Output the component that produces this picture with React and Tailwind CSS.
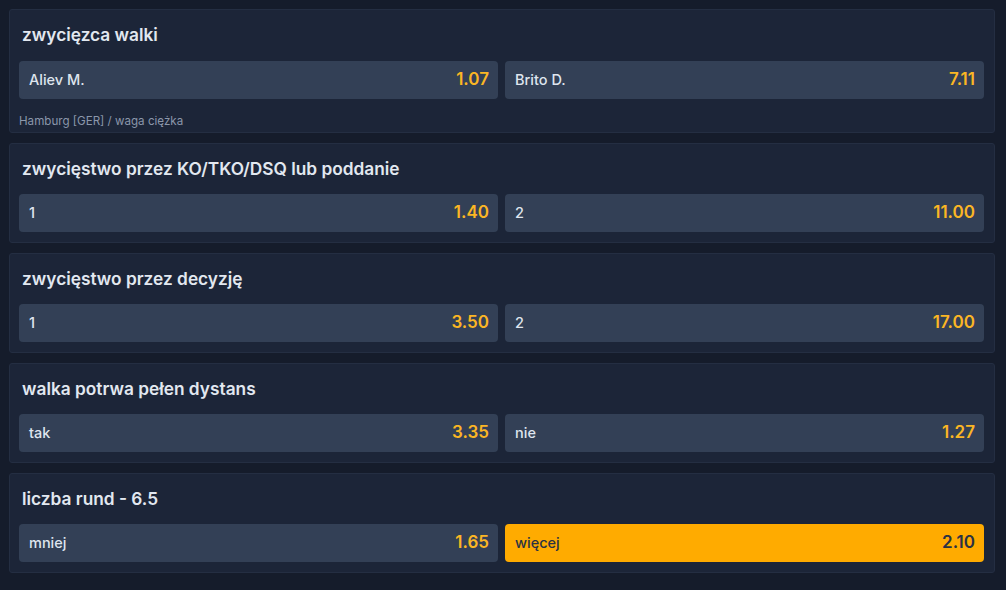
import React, { useState } from "react";

const markets = [
  {
    title: "zwycięzca walki",
    options: [
      { label: "Aliev M.", odds: "1.07" },
      { label: "Brito D.", odds: "7.11" },
    ],
    note: "Hamburg [GER] / waga ciężka",
  },
  {
    title: "zwycięstwo przez KO/TKO/DSQ lub poddanie",
    options: [
      { label: "1", odds: "1.40" },
      { label: "2", odds: "11.00" },
    ],
  },
  {
    title: "zwycięstwo przez decyzję",
    options: [
      { label: "1", odds: "3.50" },
      { label: "2", odds: "17.00" },
    ],
  },
  {
    title: "walka potrwa pełen dystans",
    options: [
      { label: "tak", odds: "3.35" },
      { label: "nie", odds: "1.27" },
    ],
  },
  {
    title: "liczba rund - 6.5",
    options: [
      { label: "mniej", odds: "1.65" },
      { label: "więcej", odds: "2.10" },
    ],
  },
];

const OddButton = ({ label, odds, selected, onClick }) => (
  <button
    onClick={onClick}
    className={
      "h-[38px] flex items-center justify-between pl-[10px] pr-[9px] rounded-[4px] cursor-pointer " +
      (selected ? "bg-[#ffab00]" : "bg-[#334056] hover:bg-[#3a4860]")
    }
  >
    <span
      className={
        "text-[14.5px] font-medium " +
        (selected ? "text-[#2a3244]" : "text-[#dfe5ee]")
      }
    >
      {label}
    </span>
    <span
      className={
        "text-[17px] font-semibold " +
        (selected ? "text-[#2a3244]" : "text-[#fbb624]")
      }
    >
      {odds}
    </span>
  </button>
);

const Market = ({ market, index, picked, onPick }) => (
  <div
    className={
      "border border-[#242e42] bg-[#1c2538] rounded-[3px] pl-[9px] pr-[10px] pt-[9px] " +
      (market.note ? "pb-[5px]" : "pb-[10px]")
    }
  >
    <div
      className={
        "pl-[3px] pt-[6px] h-[26px] leading-[20px] text-[17.3px] font-semibold text-[#e2e8f0] " +
        (market.note ? "mb-[16px]" : "mb-[15px]")
      }
    >
      {market.title}
    </div>
    <div className="grid grid-cols-2 gap-[7px]">
      {market.options.map((opt, i) => (
        <OddButton
          key={opt.label}
          label={opt.label}
          odds={opt.odds}
          selected={picked === `${index}-${i}`}
          onClick={() => onPick(`${index}-${i}`)}
        />
      ))}
    </div>
    {market.note && (
      <div className="pt-[16px] leading-[12px] text-[11.6px] text-[#8b97ab]">
        {market.note}
      </div>
    )}
  </div>
);

export default function App() {
  const [picked, setPicked] = useState("4-1");

  return (
    <div
      className="w-[1006px] h-[590px] bg-[#151c2b] pt-[9px] pl-[9px]"
      style={{ fontFamily: "Inter, 'Noto Sans', sans-serif" }}
    >
      <div className="w-[986px] flex flex-col gap-[10px]">
        {markets.map((m, i) => (
          <Market
            key={m.title}
            market={m}
            index={i}
            picked={picked}
            onPick={(id) => setPicked(id === picked ? null : id)}
          />
        ))}
      </div>
    </div>
  );
}
